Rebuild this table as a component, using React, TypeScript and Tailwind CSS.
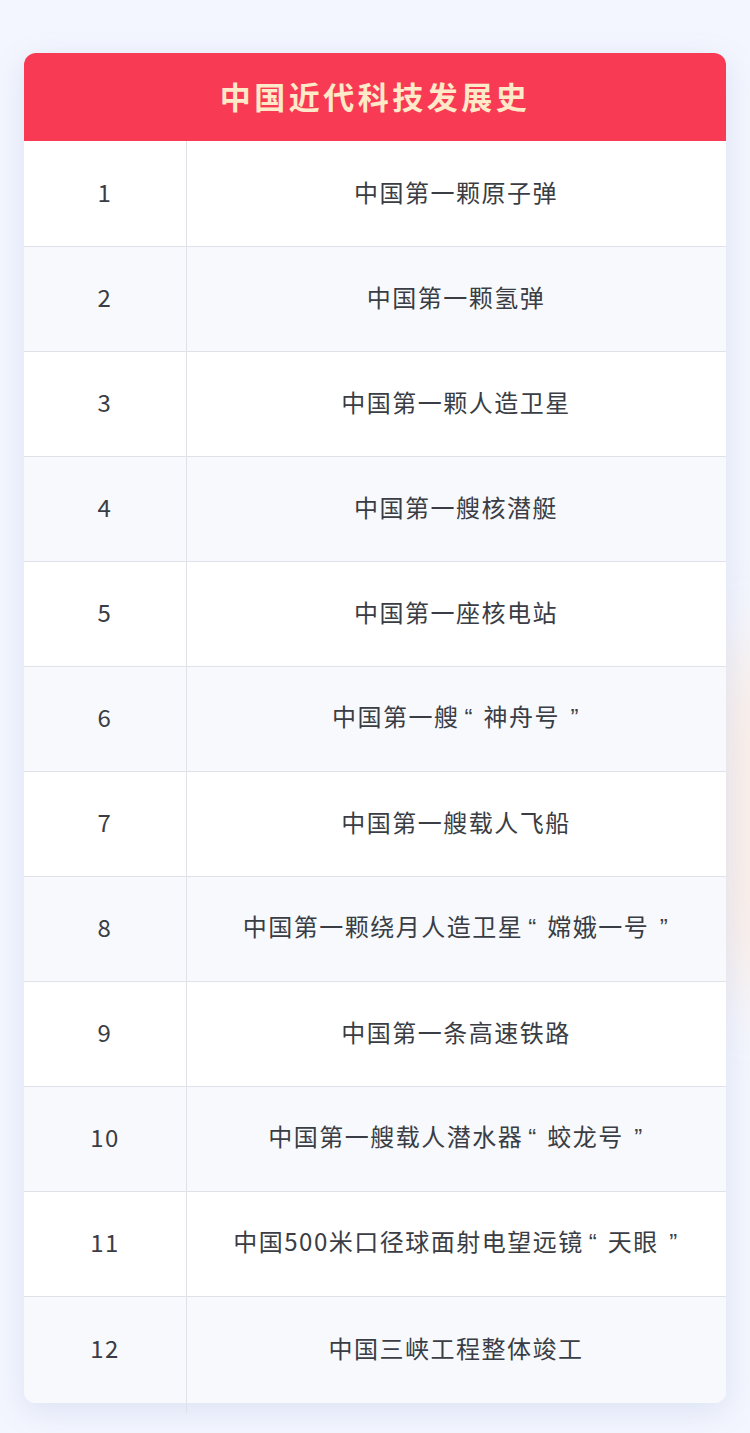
import React from "react";

const items = [
  "中国第一颗原子弹",
  "中国第一颗氢弹",
  "中国第一颗人造卫星",
  "中国第一艘核潜艇",
  "中国第一座核电站",
  "中国第一艘“神舟号”",
  "中国第一艘载人飞船",
  "中国第一颗绕月人造卫星“嫦娥一号”",
  "中国第一条高速铁路",
  "中国第一艘载人潜水器“蛟龙号”",
  "中国500米口径球面射电望远镜“天眼”",
  "中国三峡工程整体竣工",
];

function Label({ text }: { text: string }) {
  const parts: React.ReactNode[] = [];
  let buf = "";
  let k = 0;
  for (const ch of text) {
    if (ch === "“" || ch === "”") {
      if (buf) parts.push(<span key={k++}>{buf}</span>);
      buf = "";
      parts.push(
        <span
          key={k++}
          className={`inline-block ${ch === "“" ? "w-[24px] pl-[5px] text-left" : "w-[20px] text-right"}`}
          style={{ fontFamily: '"Liberation Sans", sans-serif' }}
        >
          {ch}
        </span>
      );
    } else {
      buf += ch;
    }
  }
  if (buf) parts.push(<span key={k++}>{buf}</span>);
  return <>{parts}</>;
}

export default function App() {
  return (
    <div
      className="relative min-h-[1433px] w-[750px] overflow-hidden bg-[#f3f6fe] px-[24px] pt-[53px]"
      style={{ fontFamily: '"Noto Sans CJK SC", "Noto Sans", sans-serif' }}
    >
      <div className="pointer-events-none absolute right-[-120px] top-[640px] h-[360px] w-[160px] rounded-full bg-[#fde9dc] opacity-70 blur-[40px]" />
      <div className="relative rounded-[12px] bg-white shadow-[0_8px_30px_rgba(120,140,200,0.18)]">
        <div className="flex h-[88px] items-center justify-center rounded-t-[12px] bg-[#f83a54] pb-[2px]">
          <span className="text-[31px] font-bold tracking-[3.5px] text-[#fee9c8]">
            中国近代科技发展史
          </span>
        </div>
        <div className="relative">
          {items.map((t, i) => (
            <div
              key={i}
              className={`flex items-center pb-[4px] ${i > 0 ? "border-t border-[#dfe2e8]" : ""} ${
                i % 2 === 1 ? "bg-[#f7f9fd]" : "bg-white"
              } ${i === items.length - 1 ? "h-[107px] rounded-b-[12px]" : "h-[105px]"}`}
            >
              <div className="w-[162px] text-center text-[24px] tracking-[1.5px] text-[#3a3d44]">
                {i + 1}
              </div>
              <div className="flex-1 text-center text-[24px] tracking-[1.5px] text-[#3a3d44]">
                <Label text={t} />
              </div>
            </div>
          ))}
          <div className="absolute bottom-[-10px] left-[162px] top-0 w-px bg-[#dfe2e8]" />
        </div>
      </div>
    </div>
  );
}
